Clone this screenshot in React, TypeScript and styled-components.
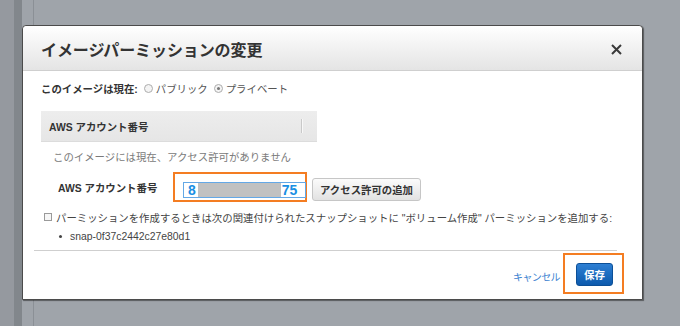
import React from "react";
import styled, { createGlobalStyle } from "styled-components";

const GlobalStyle = createGlobalStyle`
  html, body {
    margin: 0;
    padding: 0;
    background: #9fa4aa;
  }
  body {
    font-family: "Liberation Sans", "Noto Sans CJK JP", sans-serif;
    overflow: hidden;
  }
`;

const CloseIcon = () => (
  <svg width="11" height="11" viewBox="0 0 11 11">
    <path d="M1 1 L10 10 M10 1 L1 10" stroke="#3a3a3a" strokeWidth="2" />
  </svg>
);

const Radio = ({ checked }: { checked?: boolean }) => (
  <RadioCircle>{checked && <RadioDot />}</RadioCircle>
);

const App = () => {
  return (
    <Page>
      <GlobalStyle />
      <Rail>
        <Strip width={14} color="#95999f" />
        <Strip width={8} color="#82878c" />
        <Strip width={11} color="#9fa4aa" />
      </Rail>

      <Modal>
        <Header>
          <Title>イメージパーミッションの変更</Title>
          <CloseButton>
            <CloseIcon />
          </CloseButton>
        </Header>

        <Body>
          <StatusRow>
            <Bold>このイメージは現在:</Bold>
            <RadioLabel>
              <Radio />
              パブリック
            </RadioLabel>
            <RadioLabel>
              <Radio checked />
              プライベート
            </RadioLabel>
          </StatusRow>

          <TableHead>
            <Bold>AWS アカウント番号</Bold>
            <Separator />
          </TableHead>

          <EmptyText>このイメージには現在、アクセス許可がありません</EmptyText>

          <AccountRow>
            <AccountLabel>AWS アカウント番号</AccountLabel>
            <Highlight>
              <AccountInput>
                <Digits>8</Digits>
                <Masked />
                <Digits>75</Digits>
              </AccountInput>
            </Highlight>
            <GrayButton>アクセス許可の追加</GrayButton>
          </AccountRow>

          <CheckRow>
            <CheckBox />
            パーミッションを作成するときは次の関連付けられたスナップショットに "ボリューム作成" パーミッションを追加する:
          </CheckRow>

          <BulletRow>
            <Bullet />
            snap-0f37c2442c27e80d1
          </BulletRow>
        </Body>

        <Divider />

        <Footer>
          <CancelLink>キャンセル</CancelLink>
          <SaveHighlight>
            <PrimaryButton>保存</PrimaryButton>
          </SaveHighlight>
        </Footer>
      </Modal>
    </Page>
  );
};

const Page = styled.div`
  position: relative;
  width: 680px;
  height: 326px;
  display: flex;
  background: #9fa4aa;
`;
const Rail = styled.div`
  display: flex;
  height: 100%;
  border-right: 1px solid #8b9096;
`;
const Strip = styled.div<{ width: number; color: string }>`
  width: ${(p) => p.width}px;
  height: 100%;
  background: ${(p) => p.color};
`;
const Modal = styled.div`
  position: absolute;
  left: 22px;
  top: 25px;
  width: 619px;
  height: 273px;
  background: #fff;
  border: 1px solid #4b4b4b;
  border-radius: 4px 4px 0 0;
  box-shadow: 1px 1px 1px rgba(0, 0, 0, 0.45);
  display: flex;
  flex-direction: column;
  overflow: hidden;
  & > * {
    flex-shrink: 0;
  }
`;
const Header = styled.div`
  height: 43px;
  display: flex;
  align-items: center;
  justify-content: space-between;
  padding: 1px 20px 0 18px;
  background: linear-gradient(#ffffff, #e4e4e4);
  border-bottom: 1px solid #cfcfcf;
  border-radius: 4px 4px 0 0;
`;
const Title = styled.div`
  font-size: 16px;
  font-weight: bold;
  color: #333;
  letter-spacing: -0.1px;
`;
const CloseButton = styled.div`
  display: flex;
  align-items: center;
  padding-top: 1px;
`;
const Body = styled.div`
  display: flex;
  flex-direction: column;
  padding-left: 18px;
  font-size: 10.4px;
  color: #333;
`;
const Bold = styled.span`
  font-weight: bold;
  color: #333;
`;
const StatusRow = styled.div`
  display: flex;
  align-items: center;
  height: 16px;
  margin-top: 9px;
  gap: 4px;
`;
const RadioLabel = styled.span`
  display: flex;
  align-items: center;
  gap: 3px;
  color: #555;
`;
const RadioCircle = styled.span`
  width: 7px;
  height: 7px;
  border: 1px solid #adadad;
  border-radius: 50%;
  background: #f4f4f4;
  display: flex;
  align-items: center;
  justify-content: center;
  margin-left: 2px;
`;
const RadioDot = styled.span`
  width: 3px;
  height: 3px;
  border-radius: 50%;
  background: #777;
`;
const TableHead = styled.div`
  margin-top: 15px;
  width: 276px;
  height: 31px;
  box-sizing: border-box;
  background: linear-gradient(#ededed, #e6e6e6);
  border-bottom: 1px solid #dcdcdc;
  display: flex;
  align-items: center;
  justify-content: space-between;
  padding: 0 15px 0 8px;
  color: #444;
`;
const Separator = styled.span`
  width: 1px;
  height: 14px;
  background: #c9c9c9;
  box-shadow: 1px 0 0 #f8f8f8;
`;
const EmptyText = styled.div`
  margin-top: 8px;
  height: 16px;
  line-height: 16px;
  padding-left: 12px;
  color: #7a7a7a;
`;
const AccountRow = styled.div`
  margin-top: 6px;
  display: flex;
  align-items: flex-start;
`;
const AccountLabel = styled.div`
  width: 132px;
  padding-left: 17px;
  box-sizing: border-box;
  font-weight: bold;
  color: #333;
  line-height: 34px;
  white-space: nowrap;
`;
const Highlight = styled.div`
  width: 134px;
  height: 30px;
  box-sizing: border-box;
  border: 2px solid #f47d22;
  padding: 8px 0 0 8px;
`;
const AccountInput = styled.div`
  width: 123px;
  height: 16px;
  box-sizing: border-box;
  border: 1px solid #64a8e6;
  background: #fff;
  display: flex;
  align-items: center;
  padding-left: 4px;
`;
const Digits = styled.span`
  font-size: 14px;
  font-weight: bold;
  color: #1a8fe3;
  line-height: 14px;
`;
const Masked = styled.span`
  width: 83px;
  height: 14px;
  margin: 0 1px 0 2px;
  background: #c1c1c1;
`;
const GrayButton = styled.div`
  margin: 6px 0 0 5px;
  width: 109px;
  height: 23px;
  box-sizing: border-box;
  border: 1px solid #c6c6c6;
  border-radius: 3px;
  background: linear-gradient(#fbfbfb, #e2e2e2);
  display: flex;
  align-items: center;
  justify-content: center;
  font-weight: bold;
  color: #333;
`;
const CheckRow = styled.div`
  margin-top: 3px;
  height: 16px;
  display: flex;
  align-items: center;
  color: #444;
  white-space: nowrap;
`;
const CheckBox = styled.span`
  width: 6px;
  height: 6px;
  margin: 0 4px 0 3px;
  border: 1px solid #9a9a9a;
  background: #f6f6f6;
`;
const BulletRow = styled.div`
  margin-top: 3px;
  height: 16px;
  display: flex;
  align-items: center;
  padding-left: 18px;
  color: #444;
`;
const Bullet = styled.span`
  width: 3px;
  height: 3px;
  border-radius: 50%;
  background: #444;
  margin-right: 8px;
`;
const Divider = styled.div`
  margin: 6px 25px 0 11px;
  height: 1px;
  background: #cfcfcf;
`;
const Footer = styled.div`
  display: flex;
  justify-content: flex-end;
  align-items: flex-start;
  padding: 2px 18px 0 0;
`;
const CancelLink = styled.span`
  margin-top: 16px;
  font-size: 10px;
  letter-spacing: -0.6px;
  color: #3a7fd0;
  padding-right: 3px;
`;
const SaveHighlight = styled.div`
  width: 61px;
  height: 41px;
  box-sizing: border-box;
  border: 2px solid #f47d22;
  padding: 8px 0 0 11px;
`;
const PrimaryButton = styled.div`
  width: 37px;
  height: 23px;
  box-sizing: border-box;
  border: 1px solid #0c4f97;
  border-radius: 3px;
  background: linear-gradient(#2d7fd3, #0d5aad);
  color: #fff;
  font-size: 10.5px;
  font-weight: bold;
  display: flex;
  align-items: center;
  justify-content: center;
`;

export default App;
